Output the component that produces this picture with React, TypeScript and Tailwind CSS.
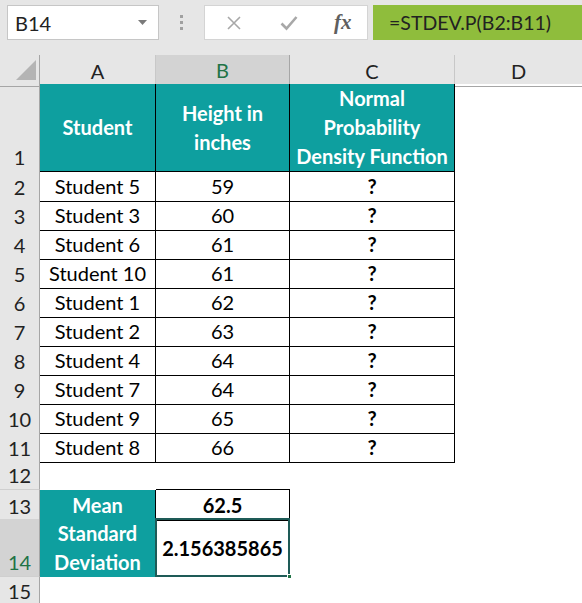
import React from "react";

const COLS = "grid grid-cols-[40px_116px_134px_165px_1fr]";

const students: [string, number][] = [
  ["Student 5", 59],
  ["Student 3", 60],
  ["Student 6", 61],
  ["Student 10", 61],
  ["Student 1", 62],
  ["Student 2", 63],
  ["Student 4", 64],
  ["Student 7", 64],
  ["Student 9", 65],
  ["Student 8", 66],
];

function RowHead({ n, selected = false }: { n: number; selected?: boolean }) {
  return (
    <div
      className={`flex items-end justify-center pb-[1px] border-r border-b border-r-[#a6a6a6] border-b-[#cfcfcf] text-[20px] leading-[26px] ${
        selected ? "bg-[#d3d3d3] text-[#217346]" : "bg-[#e6e6e6] text-[#222]"
      }`}
    >
      {n}
    </div>
  );
}

function Teal({ children, border = true }: { children: React.ReactNode; border?: boolean }) {
  return (
    <div
      className={`flex items-center justify-center text-center bg-[#0e9f9f] text-white font-bold leading-[29px] ${
        border ? "border-r border-b border-black" : "border-r border-black"
      }`}
    >
      {children}
    </div>
  );
}

function Data({ children, bold = false }: { children?: React.ReactNode; bold?: boolean }) {
  return (
    <div
      className={`flex items-center justify-center border-r border-b border-black ${
        bold ? "font-bold" : ""
      }`}
    >
      {children}
    </div>
  );
}

export default function App() {
  return (
    <div className="w-[582px] h-[603px] overflow-hidden bg-white text-[20px] text-black font-['Lato',sans-serif]">
      {/* formula bar */}
      <div className="h-[55px] bg-[#e6e6e6] flex items-start pt-[5px]">
        <div className="ml-[7px] w-[152px] h-[35px] bg-white border border-[#c6c6c6] flex items-center justify-between pl-[7px] pr-[11px]">
          <span className="text-[20px] text-[#222]">B14</span>
          <svg width="9" height="6" viewBox="0 0 9 6">
            <path d="M0 0h9L4.5 5z" fill="#7a7a7a" />
          </svg>
        </div>
        <div className="w-[45px] h-[35px] flex flex-col items-center justify-center gap-[3px]">
          <span className="w-[3px] h-[3px] bg-[#a0a0a0]" />
          <span className="w-[3px] h-[3px] bg-[#a0a0a0]" />
          <span className="w-[3px] h-[3px] bg-[#a0a0a0]" />
        </div>
        <div className="w-[164px] h-[35px] bg-white border border-[#d4d4d4] flex items-center">
          <svg className="ml-[21px]" width="16" height="16" viewBox="0 0 16 16">
            <path d="M2 2l12 12M14 2L2 14" stroke="#a8a8a8" strokeWidth="1.6" />
          </svg>
          <svg className="ml-[38px]" width="18" height="16" viewBox="0 0 18 16">
            <path d="M1.5 8.5l5 5L16.5 2" stroke="#a8a8a8" strokeWidth="2.6" fill="none" />
          </svg>
          <span className="ml-[36px] text-[21px] italic font-bold text-[#5f5f5f] font-['Liberation_Serif',serif]">
            fx
          </span>
        </div>
        <div className="ml-[5px] flex-1 h-[35px] bg-[#8fbd3c] flex items-center pl-[16px] text-[19.5px] text-[#222]">
          =STDEV.P(B2:B11)
        </div>
      </div>

      {/* column headers */}
      <div className={`${COLS} h-[29px] bg-[#e6e6e6] text-[#222]`}>
        <div className="relative border-r border-b border-r-[#a6a6a6] border-b-[#a6a6a6]">
          <svg className="absolute left-[16px] top-[5px]" width="20" height="20" viewBox="0 0 20 20">
            <path d="M20 0V20H0z" fill="#b4b4b4" />
          </svg>
        </div>
        <div className="flex items-center justify-center border-r border-b border-r-[#c8c8c8] border-b-[#a6a6a6]">
          A
        </div>
        <div className="flex items-center justify-center bg-[#d3d3d3] text-[#217346] border-r border-r-[#a6a6a6] border-b-2 border-b-[#217346]">
          B
        </div>
        <div className="flex items-center justify-center border-r border-b border-r-[#c8c8c8] border-b-[#a6a6a6]">
          C
        </div>
        <div className="flex items-center justify-center border-b border-b-[#a6a6a6]">D</div>
      </div>

      {/* row 1 */}
      <div className={`${COLS} h-[87px]`}>
        <RowHead n={1} />
        <Teal>Student</Teal>
        <Teal>
          Height in
          <br />
          inches
        </Teal>
        <Teal>
          Normal
          <br />
          Probability
          <br />
          Density Function
        </Teal>
        <div />
      </div>

      {/* rows 2-11 */}
      {students.map(([name, h], i) => (
        <div key={name} className={`${COLS} h-[29px]`}>
          <RowHead n={i + 2} />
          <Data>{name}</Data>
          <Data>{h}</Data>
          <Data bold>?</Data>
          <div />
        </div>
      ))}

      {/* row 12 */}
      <div className={`${COLS} h-[29px]`}>
        <RowHead n={12} />
        <div />
        <div className="border-b border-black" />
        <div />
        <div />
      </div>

      {/* row 13 */}
      <div className={`${COLS} h-[29px]`}>
        <RowHead n={13} />
        <Teal border={false}>Mean</Teal>
        <Data bold>62.5</Data>
        <div />
        <div />
      </div>

      {/* row 14 */}
      <div className={`${COLS} h-[58px]`}>
        <RowHead n={14} selected />
        <Teal border={false}>
          Standard
          <br />
          Deviation
        </Teal>
        <div className="relative flex items-center justify-center font-bold border-r border-b border-black">
          2.156385865
          <div className="absolute -left-[1px] -top-[1px] -right-[1px] -bottom-[1px] border-2 border-[#1e5b57]" />
          <div className="absolute -right-[3px] -bottom-[3px] w-[5px] h-[5px] bg-[#217346] border border-white" />
        </div>
        <div />
        <div />
      </div>

      {/* row 15 */}
      <div className={`${COLS} h-[29px]`}>
        <RowHead n={15} />
        <div />
        <div />
        <div />
        <div />
      </div>
    </div>
  );
}
